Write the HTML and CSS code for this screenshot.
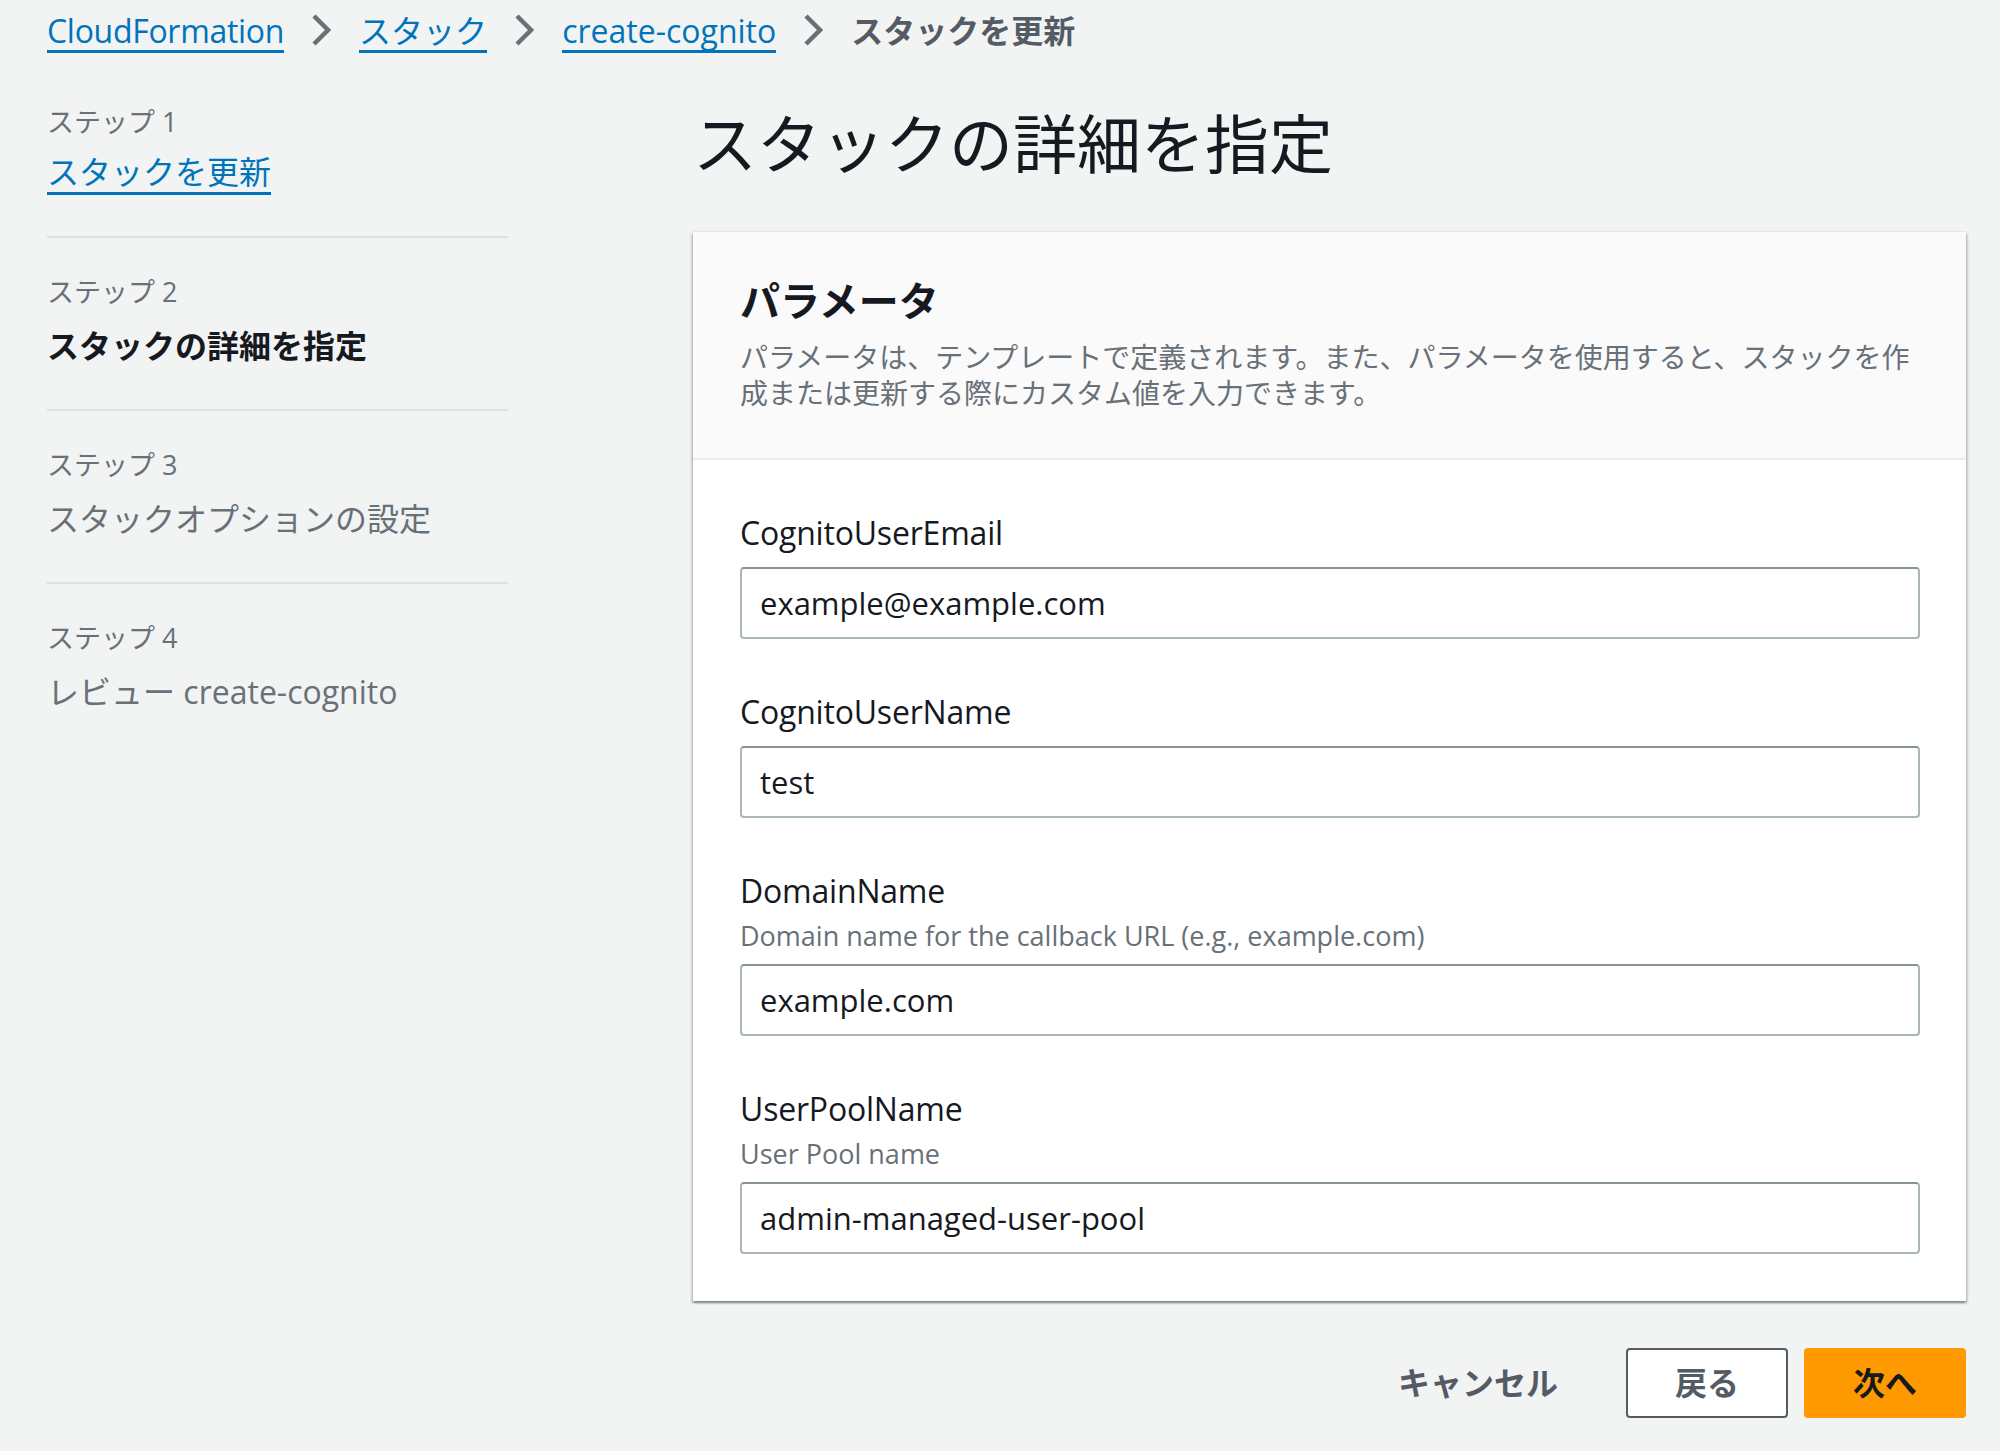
FILE: index.html
```html
<!DOCTYPE html>
<html lang="ja">
<head>
<meta charset="utf-8">
<title>スタックの詳細を指定</title>
<link rel="stylesheet" href="styles.css">
</head>
<body>
<div class="page">
  <nav class="breadcrumbs">
    <a class="crumb-link crumb-tight" href="#">CloudFormation</a>
    <svg class="chev" viewBox="0 0 20 34" width="20" height="34"><path d="M3 3 L17 17 L3 31" /></svg>
    <a class="crumb-link" href="#">スタック</a>
    <svg class="chev" viewBox="0 0 20 34" width="20" height="34"><path d="M3 3 L17 17 L3 31" /></svg>
    <a class="crumb-link" href="#">create-cognito</a>
    <svg class="chev" viewBox="0 0 20 34" width="20" height="34"><path d="M3 3 L17 17 L3 31" /></svg>
    <span class="crumb-current">スタックを更新</span>
  </nav>

  <div class="layout">
    <aside class="steps">
      <div class="step step-first">
        <div class="step-num">ステップ 1</div>
        <div class="step-title"><a class="step-link" href="#">スタックを更新</a></div>
      </div>
      <div class="step">
        <div class="step-num">ステップ 2</div>
        <div class="step-title step-active">スタックの詳細を指定</div>
      </div>
      <div class="step">
        <div class="step-num">ステップ 3</div>
        <div class="step-title step-disabled">スタックオプションの設定</div>
      </div>
      <div class="step step-last">
        <div class="step-num">ステップ 4</div>
        <div class="step-title step-disabled">レビュー create-cognito</div>
      </div>
    </aside>

    <main class="main">
      <h1 class="page-title">スタックの詳細を指定</h1>
      <section class="card">
        <header class="card-header">
          <h2 class="card-title">パラメータ</h2>
          <p class="card-desc">パラメータは、テンプレートで定義されます。また、パラメータを使用すると、スタックを作成または更新する際にカスタム値を入力できます。</p>
        </header>
        <div class="card-body">
          <div class="field">
            <label class="field-label">CognitoUserEmail</label>
            <div class="input">example@example.com</div>
          </div>
          <div class="field">
            <label class="field-label">CognitoUserName</label>
            <div class="input">test</div>
          </div>
          <div class="field">
            <label class="field-label">DomainName</label>
            <div class="field-desc">Domain name for the callback URL (e.g., example.com)</div>
            <div class="input">example.com</div>
          </div>
          <div class="field">
            <label class="field-label">UserPoolName</label>
            <div class="field-desc">User Pool name</div>
            <div class="input">admin-managed-user-pool</div>
          </div>
        </div>
      </section>
      <div class="actions">
        <button class="btn btn-link">キャンセル</button>
        <button class="btn btn-normal">戻る</button>
        <button class="btn btn-primary">次へ</button>
      </div>
    </main>
  </div>
</div>
</body>
</html>
```

FILE: styles.css
```css
* { box-sizing: border-box; }

html, body {
  margin: 0;
  padding: 0;
  background: #f2f3f3;
}

body {
  font-family: "Open Sans", "Noto Sans CJK JP", sans-serif;
  color: #16191f;
  width: 2000px;
  min-height: 1451px;
}

.page {
  padding: 0 34px 0 47px;
}

/* Breadcrumbs */
.breadcrumbs {
  height: 64px;
  padding-top: 12px;
  display: flex;
  align-items: flex-start;
  font-size: 32px;
}

.crumb-link {
  display: inline-block;
  line-height: 38px;
  color: #0073bb;
  text-decoration: none;
  border-bottom: 3px solid #0073bb;
}

.crumb-tight {
  letter-spacing: -0.3px;
}

.crumb-current {
  line-height: 38px;
  color: #545b64;
  font-weight: 700;
}

.chev {
  margin: 1px 28px 0 27px;
  flex: none;
}

.chev path {
  fill: none;
  stroke: #687078;
  stroke-width: 4.5;
}

/* Layout */
.layout {
  display: grid;
  grid-template-columns: 461px 1fr;
  column-gap: 185px;
  padding-top: 40px;
}

/* Steps */
.step {
  padding: 36px 0 41px;
  border-bottom: 2px solid #dde1e1;
}

.step-first {
  padding-top: 0;
}

.step-last {
  border-bottom: none;
}

.step-num {
  font-size: 27px;
  line-height: 36px;
  color: #687078;
}

.step-title {
  margin-top: 14px;
  font-size: 32px;
  line-height: 44px;
  color: #687078;
}

.step-first .step-title {
  margin-top: 11px;
}

.step-link {
  display: inline-block;
  line-height: 41px;
  color: #0073bb;
  text-decoration: none;
  border-bottom: 3px solid #0073bb;
  vertical-align: top;
}

.step-active {
  color: #16191f;
  font-weight: 700;
}

.step-disabled {
  color: #687078;
}

/* Main */
.page-title {
  margin: 0;
  font-size: 64px;
  line-height: 80px;
  font-weight: 400;
  color: #16191f;
}

.card {
  margin-top: 48px;
  background: #ffffff;
  box-shadow: 0 2px 2px 0 rgba(0, 28, 36, 0.3),
              2px 2px 2px 0 rgba(0, 28, 36, 0.15),
              -2px 2px 2px 0 rgba(0, 28, 36, 0.15),
              0 -1px 0 0 rgba(0, 28, 36, 0.06);
}

.card-header {
  background: #fafafa;
  padding: 44px 46px 47px 47px;
  border-bottom: 2px solid #eaeded;
}

.card-title {
  margin: 0;
  font-size: 40px;
  line-height: 50px;
  font-weight: 700;
  color: #16191f;
}

.card-desc {
  margin: 13px 0 0;
  font-size: 28px;
  line-height: 36px;
  color: #687078;
}

.card-body {
  padding: 53px 46px 47px 47px;
  display: flex;
  flex-direction: column;
  gap: 53px;
}

.field {
  display: flex;
  flex-direction: column;
}

.field-label {
  font-size: 32px;
  line-height: 40px;
  color: #16191f;
  letter-spacing: -0.2px;
}

.field-desc {
  margin-top: 9px;
  font-size: 27px;
  line-height: 32px;
  color: #687078;
}

.input {
  margin-top: 14px;
  height: 72px;
  padding: 0 18px;
  border: 2px solid #aab7b8;
  border-top-color: #879596;
  border-radius: 4px;
  background: #ffffff;
  font-size: 31px;
  line-height: 68px;
  color: #16191f;
}

.field-desc + .input {
  margin-top: 12px;
}

/* Actions */
.actions {
  margin-top: 47px;
  display: flex;
  justify-content: flex-end;
  gap: 16px;
}

.btn {
  height: 70px;
  padding: 0 47px;
  border: 2px solid transparent;
  border-radius: 4px;
  font-family: "Open Sans", "Noto Sans CJK JP", sans-serif;
  font-size: 32px;
  font-weight: 700;
  line-height: 66px;
  cursor: pointer;
}

.btn-link {
  padding: 0 50px;
  background: transparent;
  color: #545b64;
}

.btn-normal {
  background: #ffffff;
  border-color: #545b64;
  color: #545b64;
}

.btn-primary {
  background: #ff9900;
  border-color: #ff9900;
  color: #16191f;
}
```
